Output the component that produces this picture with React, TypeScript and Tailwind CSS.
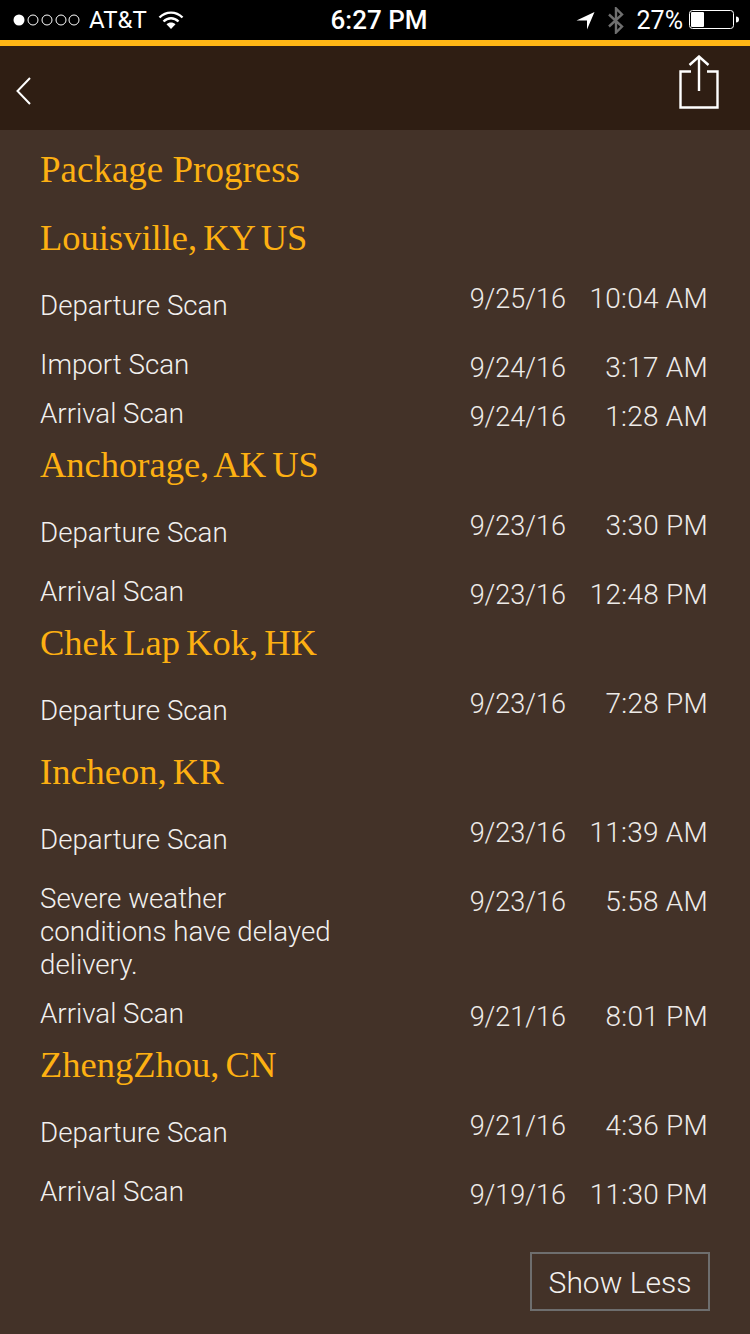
const sans = "font-['Roboto','Liberation_Sans',sans-serif]"
const serif = "font-['Liberation_Serif',serif] font-normal leading-[44px] text-[#fdb012]"

type Scan = { label: string; date: string; time: string; up?: boolean; gap: string }
type Place = { name: string; gap: string; scans: Scan[] }

const places: Place[] = [
  {
    name: 'Louisville, KY US',
    gap: 'mt-[24px]',
    scans: [
      { label: 'Departure Scan', date: '9/25/16', time: '10:04 AM', up: true, gap: 'mt-[22px]' },
      { label: 'Import Scan', date: '9/24/16', time: '3:17 AM', gap: 'mt-[26px]' },
      { label: 'Arrival Scan', date: '9/24/16', time: '1:28 AM', gap: 'mt-[12px]' },
    ],
  },
  {
    name: 'Anchorage, AK US',
    gap: 'mt-[9px]',
    scans: [
      { label: 'Departure Scan', date: '9/23/16', time: '3:30 PM', up: true, gap: 'mt-[22px]' },
      { label: 'Arrival Scan', date: '9/23/16', time: '12:48 PM', gap: 'mt-[26px]' },
    ],
  },
  {
    name: 'Chek Lap Kok, HK',
    gap: 'mt-[9px]',
    scans: [{ label: 'Departure Scan', date: '9/23/16', time: '7:28 PM', up: true, gap: 'mt-[22px]' }],
  },
  {
    name: 'Incheon, KR',
    gap: 'mt-[23px]',
    scans: [
      { label: 'Departure Scan', date: '9/23/16', time: '11:39 AM', up: true, gap: 'mt-[22px]' },
      { label: 'Severe weather conditions have delayed delivery.', date: '9/23/16', time: '5:58 AM', gap: 'mt-[26px]' },
      { label: 'Arrival Scan', date: '9/21/16', time: '8:01 PM', gap: 'mt-[16px]' },
    ],
  },
  {
    name: 'ZhengZhou, CN',
    gap: 'mt-[9px]',
    scans: [
      { label: 'Departure Scan', date: '9/21/16', time: '4:36 PM', up: true, gap: 'mt-[22px]' },
      { label: 'Arrival Scan', date: '9/19/16', time: '11:30 PM', gap: 'mt-[26px]' },
    ],
  },
]

function StatusBar() {
  return (
    <div className={`flex h-[40px] items-center justify-between bg-black pl-[13px] pr-[9px] text-white ${sans}`}>
      <div className="flex w-[262px] items-center">
        <svg width="68" height="14" viewBox="0 0 68 14">
          <circle cx="6" cy="7" r="5.5" fill="#fff" />
          {[20, 34, 48, 61].map(cx => (
            <circle key={cx} cx={cx} cy="7" r="5" fill="none" stroke="#fff" strokeWidth="1" />
          ))}
        </svg>
        <span className="ml-[8px] text-[24px] leading-none">AT&amp;T</span>
        <svg className="ml-[11px]" width="26" height="20" viewBox="0 0 26 20">
          <path d="M1.5 7.5C8 1 18 1 24.5 7.5" fill="none" stroke="#fff" strokeWidth="2.4" />
          <path d="M5.5 11.5C10 7.2 16 7.2 20.5 11.5" fill="none" stroke="#fff" strokeWidth="2.4" />
          <path d="M8.5 14.3L13 19l4.5-4.7C15 12 11 12 8.5 14.3z" fill="#fff" />
        </svg>
      </div>
      <span className="text-[26px] font-medium leading-none">6:27 PM</span>
      <div className="flex w-[258px] items-center justify-end">
        <svg width="19" height="19" viewBox="0 0 19 19">
          <path d="M0.5 9.5L18.5 1L11 18.5V9.5z" fill="#fff" />
        </svg>
        <svg className="ml-[12px]" width="18" height="27" viewBox="0 0 18 27">
          <path d="M2 7.5L15 19.5L9 25.5V1.5L15 7.5L2 19.5" fill="none" stroke="#6f6f6f" strokeWidth="2.4" />
        </svg>
        <span className="ml-[12px] text-[25px] leading-none">27%</span>
        <svg className="ml-[6px]" width="52" height="20" viewBox="0 0 52 20">
          <rect x="0.5" y="0.5" width="44" height="18" rx="3" fill="none" stroke="#fff" />
          <rect x="2" y="2" width="13" height="15" rx="1" fill="#fff" />
          <path d="M47 6.5c2 0 3 1 3 3s-1 3-3 3z" fill="#fff" />
        </svg>
      </div>
    </div>
  )
}

function Row({ scan }: { scan: Scan }) {
  return (
    <div className={`flex justify-between pl-[40px] pr-[42px] font-light leading-[33px] ${scan.gap} ${sans}`}>
      <div className={`w-[300px] text-[27.7px] text-[#f2f0ee] ${scan.up ? 'pt-[7px]' : ''}`}>{scan.label}</div>
      <div className={`flex items-baseline text-[#eeebe8] ${scan.up ? '' : 'pt-[3px]'}`}>
        <span className="text-[27px]">{scan.date}</span>
        <span className="w-[142px] text-right text-[28px] tracking-[0.25px]">{scan.time}</span>
      </div>
    </div>
  )
}

export default function App() {
  return (
    <div className="flex h-[1334px] flex-col overflow-hidden bg-[#433228]">
      <StatusBar />
      <div className="h-[6px] bg-[#fdb515]" />
      <div className="flex h-[84px] items-center justify-between bg-[#2f1e13] pl-[16px] pr-[31px]">
        <svg width="15" height="28" viewBox="0 0 15 28" className="mt-[6px]">
          <path d="M14 1L1.5 14L14 27" fill="none" stroke="#fff" strokeWidth="2" />
        </svg>
        <svg width="40" height="54" viewBox="0 0 40 54" className="mb-[12px]">
          <path d="M12 16.5H1.5V52.5H38.5V16.5H28" fill="none" stroke="#fff" strokeWidth="2.4" />
          <path d="M20 1.5V36M10.5 10L20 1.5L29.5 10" fill="none" stroke="#fff" strokeWidth="2.4" />
        </svg>
      </div>
      <div className="flex flex-col pt-[18px]">
        <h1 className={`pl-[40px] text-[37px] ${serif}`}>Package Progress</h1>
        {places.map(place => (
          <div key={place.name}>
            <h2 className={`pl-[40px] text-[36.5px] [word-spacing:-3px] ${serif} ${place.gap}`}>{place.name}</h2>
            {place.scans.map(scan => (
              <Row key={scan.label + scan.time} scan={scan} />
            ))}
          </div>
        ))}
        <div className="mt-[40px] flex justify-end pr-[40px]">
          <button className={`h-[59px] w-[180px] border-2 border-[#6e6e6e] pt-[1px] text-[30px] font-light text-[#f2f0ee] ${sans}`}>
            Show Less
          </button>
        </div>
      </div>
    </div>
  )
}
